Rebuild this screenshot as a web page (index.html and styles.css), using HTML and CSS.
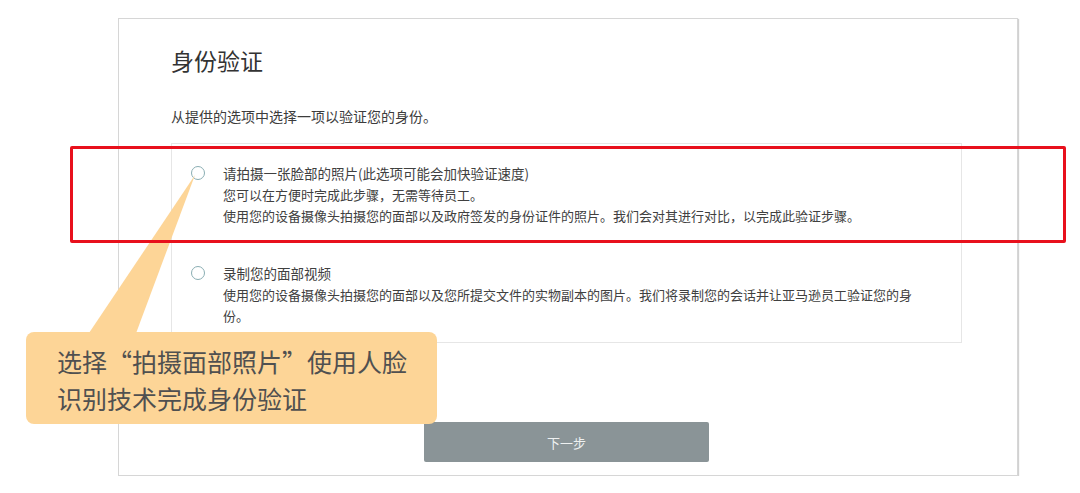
FILE: index.html
```html
<!DOCTYPE html>
<html lang="zh-CN">
<head>
<meta charset="UTF-8">
<title>身份验证</title>
<link rel="stylesheet" href="styles.css">
</head>
<body>

<div class="card">
  <h1 class="title">身份验证</h1>
  <p class="intro">从提供的选项中选择一项以验证您的身份。</p>

  <div class="options">
    <label class="option">
      <span class="radio"></span>
      <span class="option-text">
        <span class="option-name">请拍摄一张脸部的照片(此选项可能会加快验证速度)</span>
        <span class="option-desc">您可以在方便时完成此步骤，无需等待员工。</span>
        <span class="option-desc">使用您的设备摄像头拍摄您的面部以及政府签发的身份证件的照片。我们会对其进行对比，以完成此验证步骤。</span>
      </span>
    </label>
    <label class="option">
      <span class="radio"></span>
      <span class="option-text">
        <span class="option-name">录制您的面部视频</span>
        <span class="option-desc">使用您的设备摄像头拍摄您的面部以及您所提交文件的实物副本的图片。我们将录制您的会话并让亚马逊员工验证您的身份。</span>
      </span>
    </label>
  </div>

  <div class="actions">
    <button class="next">下一步</button>
  </div>
</div>

<!-- 标注 -->
<svg class="tail" width="1080" height="493" viewBox="0 0 1080 493">
  <polygon points="195,175 87,336 135,336" fill="#fdd597"></polygon>
</svg>
<div class="note">选择“拍摄面部照片”使用人脸<br>识别技术完成身份验证</div>
<div class="highlight"></div>

</body>
</html>
```

FILE: styles.css
```css
body { margin: 0; background: #fff; font-family: "Noto Sans CJK SC", "Noto Sans", sans-serif; color: #333; }

.card {
  box-sizing: border-box;
  width: 900px;
  height: 458px;
  margin: 18px 0 0 118px;
  padding: 26px 55px 0 52px;
  border: 1px solid #d6d6d6;
  box-shadow: 1px 1px 1px rgba(0, 0, 0, 0.18);
}

.title { margin: 0; font-size: 23px; line-height: 30px; font-weight: 400; color: #333; }
.intro { margin: 31px 0 0; font-size: 14px; line-height: 20px; color: #3c3c3c; }

.options {
  box-sizing: border-box;
  width: 791px;
  height: 200px;
  margin-top: 17px;
  padding: 19px 40px 0 19px;
  border: 1px solid #e6e6e6;
  display: flex;
  flex-direction: column;
  gap: 37px;
}

.option { display: flex; align-items: flex-start; gap: 18px; cursor: pointer; }
.radio {
  box-sizing: border-box;
  flex: none;
  width: 14px;
  height: 14px;
  margin-top: 3px;
  border: 1.5px solid #8aaeb3;
  border-radius: 50%;
  background: #fff;
}
.option-text { display: flex; flex-direction: column; }
.option-name { font-size: 13.5px; line-height: 21px; color: #404040; }
.option-desc { font-size: 13px; line-height: 21px; color: #404040; }

.actions { width: 791px; display: flex; justify-content: center; margin-top: 79px; }
.next {
  width: 285px;
  height: 40px;
  border: none;
  border-radius: 2px;
  background: #8a9497;
  color: #eef1f1;
  font-family: inherit;
  font-size: 13px;
}

/* 标注层 */
.tail { position: absolute; left: 0; top: 0; pointer-events: none; }
.note {
  position: absolute;
  left: 26px;
  top: 332px;
  box-sizing: border-box;
  width: 411px;
  height: 92px;
  padding: 11px 0 0 31px;
  border-radius: 8px;
  background: #fdd597;
  color: #505050;
  font-size: 25px;
  line-height: 37px;
}
.highlight {
  position: absolute;
  left: 70px;
  top: 146px;
  width: 990px;
  height: 91px;
  border: 3px solid #e8101c;
  border-radius: 2px;
}
```
